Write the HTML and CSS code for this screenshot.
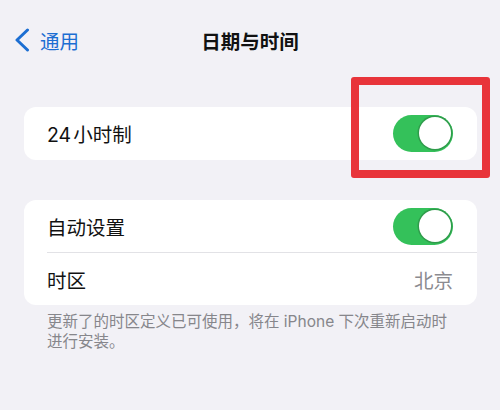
FILE: index.html
```html
<!DOCTYPE html>
<html>
<head>
    <meta charset="utf-8">
    <title>日期与时间</title>
    <link rel="stylesheet" href="styles.css">
</head>
<body>
    <div class="nav">
        <div class="back">
            <svg width="16" height="24" viewBox="0 0 16 24">
                <polyline points="13.5,2 3,12 13.5,22" fill="none" stroke="#1c6ed2" stroke-width="3" stroke-linecap="round" stroke-linejoin="round"/>
            </svg>
            <span>通用</span>
        </div>
        <div class="title">日期与时间</div>
    </div>

    <div class="card first">
        <div class="row">
            <span><span class="num">24</span>小时制</span>
            <div class="toggle"><div class="knob"></div></div>
        </div>
    </div>

    <div class="card">
        <div class="row">
            <span>自动设置</span>
            <div class="toggle"><div class="knob"></div></div>
        </div>
        <div class="sep"></div>
        <div class="row">
            <span>时区</span>
            <span class="value">北京</span>
        </div>
    </div>
    <p class="note">更新了的时区定义已可使用，将在 iPhone 下次重新启动时进行安装。</p>

    <!-- 标注框 -->
    <div class="mark"></div>
</body>
</html>
```

FILE: styles.css
```css
body {
    margin: 0;
    background-color: #f2f1f6;
    font-family: Inter, "Noto Sans CJK SC", sans-serif;
    color: #111;
    width: 500px;
    height: 410px;
    overflow: hidden;
    position: relative;
}
.nav {
    height: 40px;
    padding-top: 20px;
    position: relative;
    display: flex;
    align-items: center;
}
.back {
    display: flex;
    align-items: center;
    gap: 10px;
    padding-left: 14px;
    color: #1c6ed2;
    font-size: 19.5px;
}
.back svg {
    display: block;
}
.title {
    position: absolute;
    left: 0;
    right: 0;
    text-align: center;
    font-size: 19.5px;
    font-weight: 700;
}
.card {
    background-color: #ffffff;
    border-radius: 12px;
    margin: 0 23px 0 24px;
}
.card.first {
    margin-top: 47px;
    margin-bottom: 40px;
}
.row {
    height: 52px;
    display: flex;
    align-items: center;
    justify-content: space-between;
    padding: 0 24px 0 23px;
    font-size: 19.5px;
}
.num {
    margin-right: 2px;
}
.card.first .row {
    height: 53px;
}
.sep {
    height: 1px;
    background-color: #e2e2e6;
    margin-left: 23px;
}
.value {
    color: #8b8b90;
}
.toggle {
    width: 60px;
    height: 37px;
    border-radius: 19px;
    background-color: #34c15a;
    position: relative;
}
.knob {
    position: absolute;
    right: 2px;
    top: 2px;
    width: 32px;
    height: 32px;
    border-radius: 50%;
    background-color: #fff;
    box-shadow: 0 0 0 1.5px #2f9c4b;
}
.note {
    margin: 7px 40px 0 47px;
    font-size: 15.5px;
    line-height: 20px;
    color: #86868b;
}
.mark {
    position: absolute;
    left: 351px;
    top: 77px;
    width: 123px;
    height: 85px;
    border: 8px solid #e8343a;
    border-radius: 3px;
}
```
